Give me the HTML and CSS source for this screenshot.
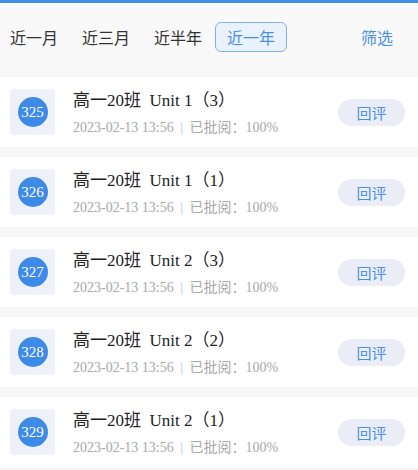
FILE: index.html
```html
<!DOCTYPE html>
<html lang="zh">
<head>
    <meta charset="UTF-8">
    <title>作业列表</title>
    <link rel="stylesheet" href="styles.css">
</head>
<body>
    <div class="topbar"></div>
    <div class="filters">
        <span class="tab">近一月</span>
        <span class="tab">近三月</span>
        <span class="tab">近半年</span>
        <span class="tab active">近一年</span>
        <span class="screen">筛选</span>
    </div>

    <div class="list">
        <div class="card">
            <div class="badge"><span class="num">325</span></div>
            <div class="info">
                <div class="title">高一20班&nbsp; Unit 1（3）</div>
                <div class="meta">2023-02-13 13:56 <span class="sep">|</span> 已批阅：100%</div>
            </div>
            <button class="review">回评</button>
        </div>
        <div class="card">
            <div class="badge"><span class="num">326</span></div>
            <div class="info">
                <div class="title">高一20班&nbsp; Unit 1（1）</div>
                <div class="meta">2023-02-13 13:56 <span class="sep">|</span> 已批阅：100%</div>
            </div>
            <button class="review">回评</button>
        </div>
        <div class="card">
            <div class="badge"><span class="num">327</span></div>
            <div class="info">
                <div class="title">高一20班&nbsp; Unit 2（3）</div>
                <div class="meta">2023-02-13 13:56 <span class="sep">|</span> 已批阅：100%</div>
            </div>
            <button class="review">回评</button>
        </div>
        <div class="card">
            <div class="badge"><span class="num">328</span></div>
            <div class="info">
                <div class="title">高一20班&nbsp; Unit 2（2）</div>
                <div class="meta">2023-02-13 13:56 <span class="sep">|</span> 已批阅：100%</div>
            </div>
            <button class="review">回评</button>
        </div>
        <div class="card">
            <div class="badge"><span class="num">329</span></div>
            <div class="info">
                <div class="title">高一20班&nbsp; Unit 2（1）</div>
                <div class="meta">2023-02-13 13:56 <span class="sep">|</span> 已批阅：100%</div>
            </div>
            <button class="review">回评</button>
        </div>
    </div>
</body>
</html>
```

FILE: styles.css
```css
body {
    margin: 0;
    background: #f6f6f7;
    font-family: "Liberation Serif", "Noto Sans CJK SC", serif;
    overflow: hidden;
}
.topbar {
    height: 3px;
    background: #3f8ee8;
}
.filters {
    display: flex;
    align-items: center;
    height: 68px;
    padding: 0 10px;
    background: #f9f9f9;
    font-family: "Noto Sans CJK SC", sans-serif;
    font-size: 16px;
    color: #333;
}
.tab {
    margin-right: 24px;
    line-height: 28px;
}
.tab.active {
    margin-left: -11px;
    padding: 0 11px;
    border: 1px solid #7fb1ee;
    border-radius: 6px;
    background: #eaf3fd;
    color: #4a90e2;
}
.screen {
    margin-left: auto;
    margin-right: 15px;
    color: #4a90e2;
}
.list {
    display: flex;
    flex-direction: column;
    gap: 10px;
    padding-top: 6px;
}
.card {
    display: flex;
    align-items: center;
    height: 70px;
    padding: 0 13px 0 10px;
    background: #fff;
}
.badge {
    display: flex;
    align-items: center;
    justify-content: center;
    width: 45px;
    height: 46px;
    border-radius: 4px;
    background: #eef0fa;
}
.num {
    display: flex;
    align-items: center;
    justify-content: center;
    width: 30px;
    height: 30px;
    border-radius: 50%;
    background: #3d8ae8;
    color: #fff;
    font-size: 15px;
}
.info {
    flex: 1;
    margin-left: 18px;
}
.title {
    font-size: 17px;
    color: #222;
    line-height: 24px;
}
.meta {
    margin-top: 3px;
    font-size: 14px;
    color: #a8a8a8;
}
.sep {
    margin: 0 3px;
    color: #c4c4c4;
}
.review {
    width: 67px;
    height: 27px;
    border: none;
    border-radius: 14px;
    background: #eaedf6;
    color: #4a8fe0;
    font-family: "Noto Sans CJK SC", sans-serif;
    font-size: 15px;
    padding: 0;
}
```
